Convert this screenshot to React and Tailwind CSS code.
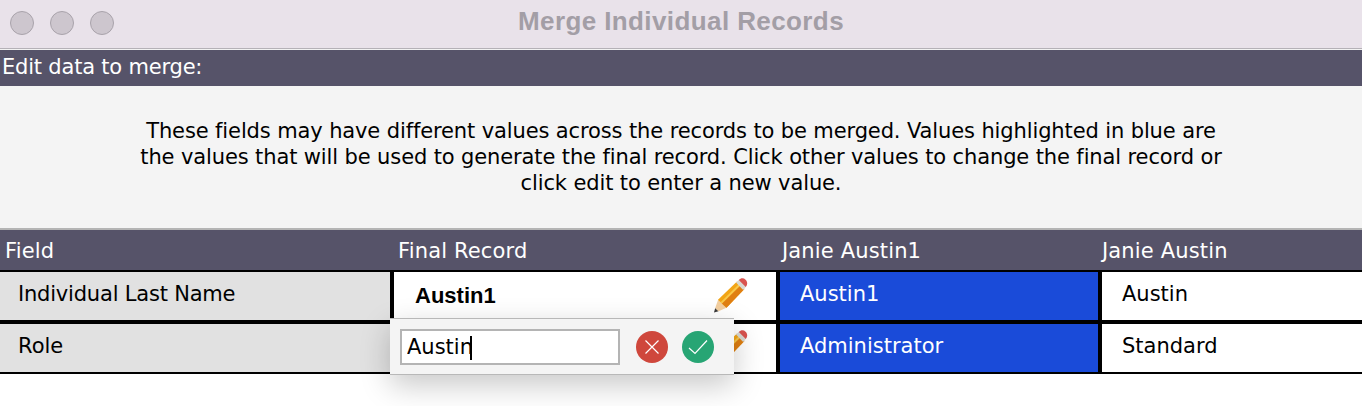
import { useState } from "react";

function Pencil() {
  return (
    <svg width="36" height="36" viewBox="0 0 36 36" className="block">
      <path d="M2 34.5 L3.2 30 L6.5 33.3 Z" fill="#3a3a3a" />
      <path d="M3.2 30 L6.2 21.5 L14.5 29.8 L6.5 33.3 Z" fill="#f3cfa0" />
      <path d="M6 21.8 L25 3.6 L32.4 11 L14.5 29.8 Z" fill="#f2a516" />
      <path d="M9.8 25.6 L28.4 7.2 L32.4 11 L14.5 29.8 Z" fill="#e07f12" />
      <path d="M8.6 24.2 L27 6 L28.4 7.4 L10 25.6 Z" fill="#f9c84a" />
      <path d="M24 4.6 L27.2 1.6 L34.2 8.6 L31.2 11.9 Z" fill="#d9d9d2" />
      <path d="M26.8 2 C29 -0.2 31.6 -0.2 33.6 1.8 C35.6 3.8 35.8 6.6 33.8 9 Z" fill="#d9534f" />
    </svg>
  );
}

function Cell({ children, className = "" }) {
  return <div className={`flex h-full items-center ${className}`}>{children}</div>;
}

export default function App() {
  const [value, setValue] = useState("Austin");

  return (
    <div className="relative w-[1362px] h-[406px] overflow-hidden bg-white text-[21px] text-black font-['DejaVu_Sans',sans-serif]">
      <div className="relative flex h-[49px] items-center gap-[16px] bg-[#e9e2ea] pl-[10px] pb-[3px] border-b border-[#b5b1b7]">
        <span className="h-6 w-6 rounded-full border border-[#a9a3ab] bg-[#cdc6ce]" />
        <span className="h-6 w-6 rounded-full border border-[#a9a3ab] bg-[#cdc6ce]" />
        <span className="h-6 w-6 rounded-full border border-[#a9a3ab] bg-[#cdc6ce]" />
        <span className="absolute inset-x-0 top-[2px] text-center font-['Liberation_Sans',sans-serif] text-[26px] font-bold tracking-[0.4px] text-[#a39ea6]">
          Merge Individual Records
        </span>
      </div>
      <div className="h-px bg-[#f2f2f2]" />
      <div className="flex h-[36px] items-center bg-[#565369] pl-[2px] tracking-[-0.2px] text-white">Edit data to merge:</div>
      <div className="flex h-[142px] items-center justify-center bg-[#f4f4f4] text-center leading-[26px] tracking-[-0.12px]">
        <p className="w-[1200px]">
          These fields may have different values across the records to be merged. Values highlighted in blue are
          <br />
          the values that will be used to generate the final record. Click other values to change the final record or
          <br />
          click edit to enter a new value.
        </p>
      </div>
      <div className="h-[2px] bg-[#b4b4b4]" />
      <div className="grid h-[40px] grid-cols-[394px_386px_320px_1fr] items-center bg-[#565369] pt-[3px] tracking-[0.15px] text-white">
        <span className="pl-[5px]">Field</span>
        <span className="pl-[4px]">Final Record</span>
        <span className="pl-[2px]">Janie Austin1</span>
        <span className="pl-[2px]">Janie Austin</span>
      </div>
      <div className="grid grid-cols-[390px_382px_318px_1fr] grid-rows-[48px_48px] gap-x-[4px] gap-y-[4px] bg-black pt-[2px] pb-[2px]">
        <Cell className="bg-[#e1e1e1] pl-[18px] pb-[3px] tracking-[-0.2px]">Individual Last Name</Cell>
        <Cell className="justify-between bg-white pl-[21px] pr-[28px] font-bold">
          <span className="mb-[2px] font-['Liberation_Sans',sans-serif] text-[22px]">Austin1</span>
          <Pencil />
        </Cell>
        <Cell className="bg-[#1a4bd9] pl-[20px] pb-[3px] text-white">Austin1</Cell>
        <Cell className="bg-white pl-[20px] pb-[3px]">Austin</Cell>
        <Cell className="bg-[#e1e1e1] pl-[18px] pb-[2px]">Role</Cell>
        <Cell className="justify-end bg-white pr-[28px]">
          <Pencil />
        </Cell>
        <Cell className="bg-[#1a4bd9] pl-[20px] pb-[2px] text-white">Administrator</Cell>
        <Cell className="bg-white pl-[20px] pb-[2px]">Standard</Cell>
      </div>

      <div className="absolute left-[390px] top-[318px] flex h-[57px] w-[344px] items-center border-t border-b border-[#b8b8b8] bg-[#f4f4f4] pl-[10px] shadow-[0_10px_30px_rgba(0,0,0,0.22)]">
        <input
          value={value}
          onChange={(e) => setValue(e.target.value)}
          className="h-[36px] w-[220px] border-2 border-[#b4b4b4] bg-white pl-[5px] text-[21px] outline-none"
        />
        <span className="absolute left-[80px] top-[17px] h-[24px] w-[2px] bg-black" />
        <button className="ml-[16px] flex h-8 w-8 items-center justify-center rounded-full bg-[#cf473c]">
          <svg width="16" height="16" viewBox="0 0 16 16" fill="none" stroke="white" strokeWidth="1.2">
            <path d="M1.5 1.5 L14.5 14.5 M14.5 1.5 L1.5 14.5" />
          </svg>
        </button>
        <button className="ml-[14px] flex h-8 w-8 items-center justify-center rounded-full bg-[#27a574]">
          <svg width="20" height="16" viewBox="0 0 20 16" fill="none" stroke="white" strokeWidth="1.2">
            <path d="M1 9 L7 14.5 L19 1.5" />
          </svg>
        </button>
      </div>
    </div>
  );
}
